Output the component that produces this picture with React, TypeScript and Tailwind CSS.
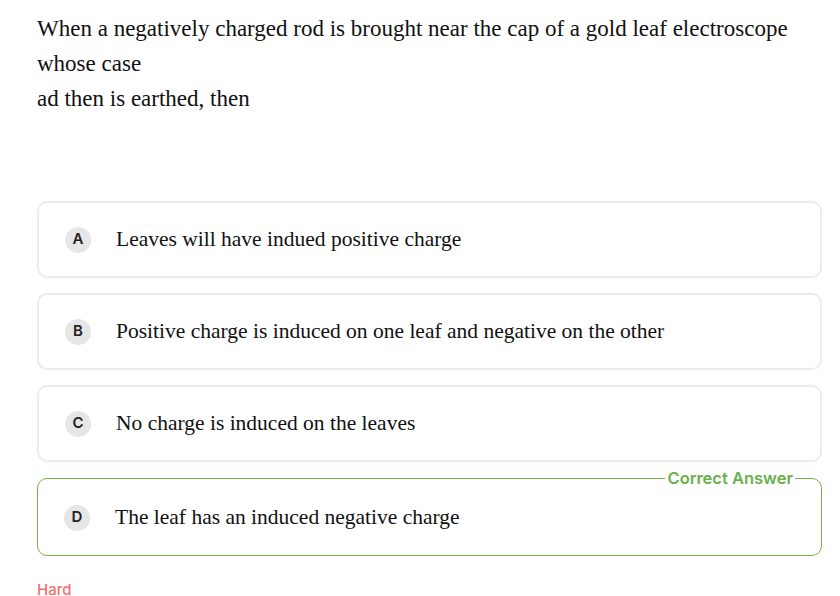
import React from "react";

type Option = { key: string; text: string; correct?: boolean };

const OPTIONS: Option[] = [
  { key: "A", text: "Leaves will have indued positive charge" },
  { key: "B", text: "Positive charge is induced on one leaf and negative on the other" },
  { key: "C", text: "No charge is induced on the leaves" },
  { key: "D", text: "The leaf has an induced negative charge", correct: true },
];

const serif = "font-['Liberation_Serif',serif]";
const sans = "font-['Inter',sans-serif]";

function Row({ opt }: { opt: Option }) {
  return (
    <div className="flex items-center gap-[25px] px-[26px] h-[73px]">
      <span
        className={`${sans} size-[26px] rounded-full bg-[#e6e6e6] text-[#222] text-[15px] font-semibold flex items-center justify-center shrink-0`}
      >
        {opt.key}
      </span>
      <span className={`${serif} text-[21.5px] text-[#111]`}>{opt.text}</span>
    </div>
  );
}

export default function App() {
  return (
    <div className="w-[840px] h-[596px] overflow-hidden bg-white pl-[37px] pr-[18px] pt-[11px]">
      <p className={`${serif} text-[23px] leading-[35px] text-[#111]`}>
        When a negatively charged rod is brought near the cap of a gold leaf electroscope
        <br />
        whose case
        <br />
        ad then is earthed, then
      </p>
      <div className="mt-[85px] flex flex-col gap-[15px]">
        {OPTIONS.map((opt) =>
          opt.correct ? (
            <fieldset
              key={opt.key}
              className="border border-[#7cb342] rounded-[10px] -mt-[9px] pb-[1px]"
            >
              <legend
                className={`${sans} ml-auto mr-[26px] px-[2px] text-[16.5px] leading-[20px] font-semibold text-[#6ab04c]`}
              >
                Correct Answer
              </legend>
              <div className="-mt-[7px]">
                <Row opt={opt} />
              </div>
            </fieldset>
          ) : (
            <div key={opt.key} className="border-2 border-[#ececec] rounded-[10px]">
              <Row opt={opt} />
            </div>
          )
        )}
      </div>
      <div className={`${sans} mt-[23px] text-[15px] font-medium text-[#f26d6d]`}>Hard</div>
    </div>
  );
}
